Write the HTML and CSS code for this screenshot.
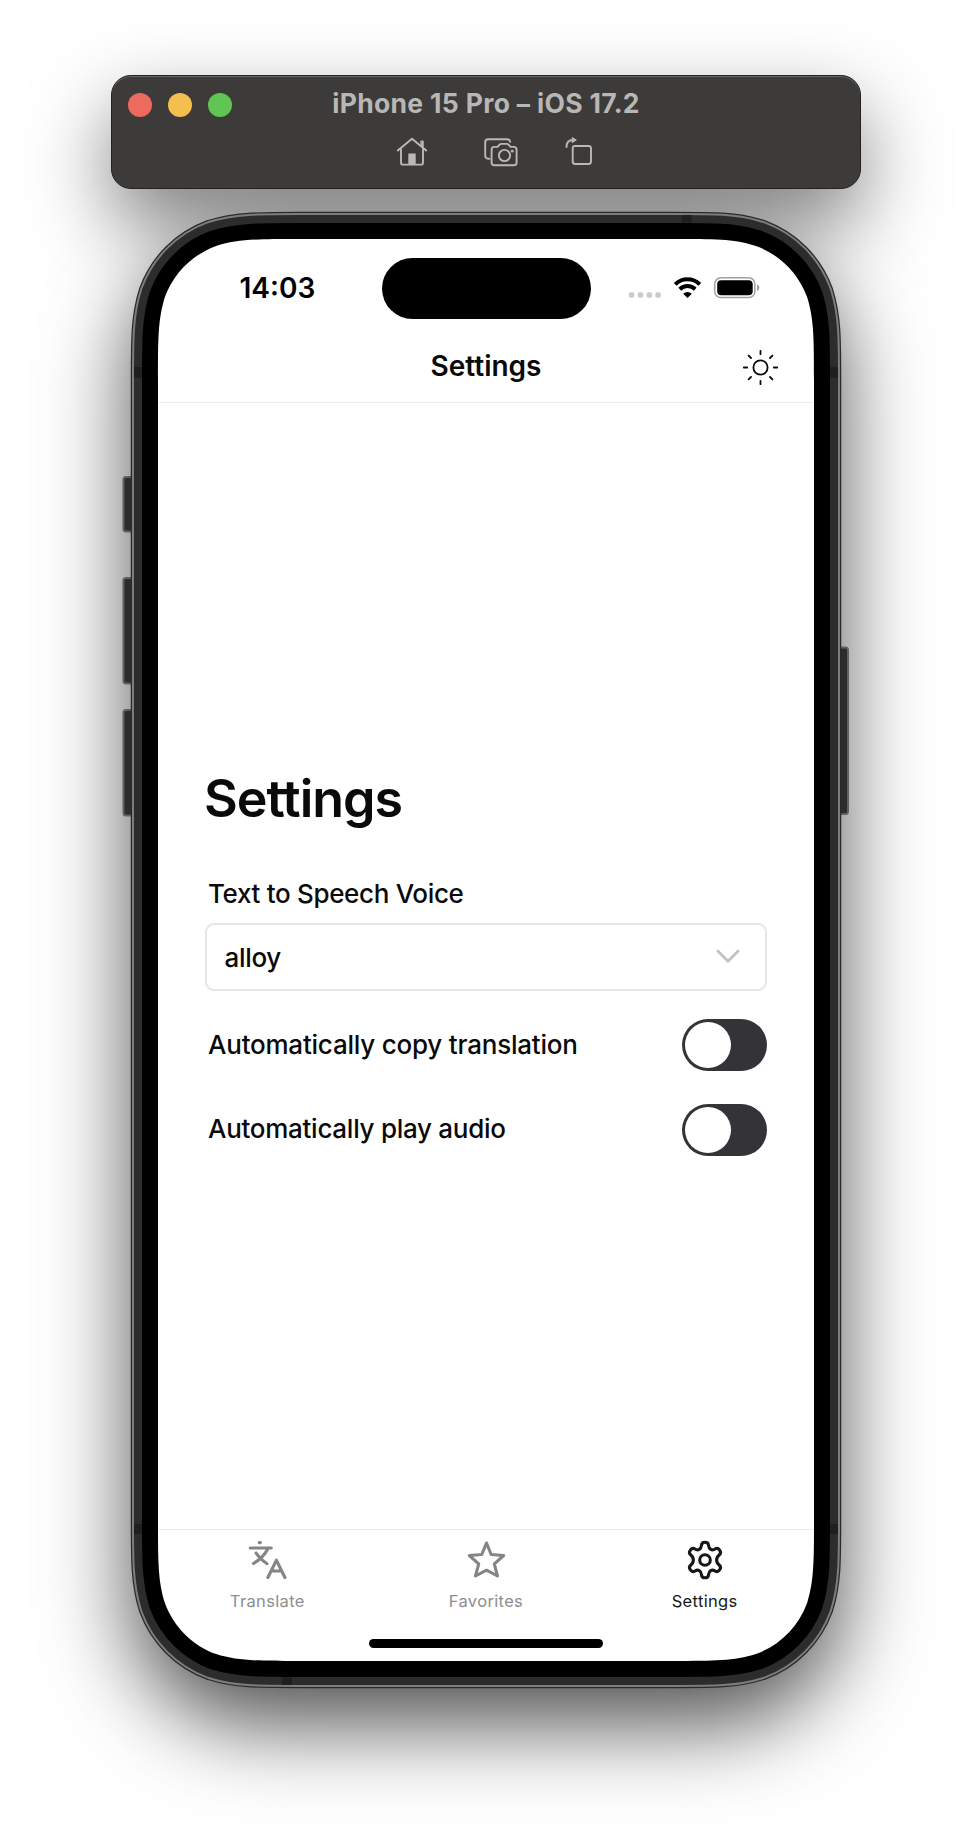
FILE: index.html
```
<!DOCTYPE html>
<html lang="en">
<head>
<meta charset="utf-8">
<title>Settings</title>
<link rel="stylesheet" href="styles.css">
</head>
<body>
<div class="window">
  <header class="toolbar">
    <div class="title-row">
      <div class="lights"><span class="light red"></span><span class="light yellow"></span><span class="light green"></span></div>
      <div class="title"><span class="title-text">iPhone 15 Pro – iOS 17.2</span></div>
      <div></div>
    </div>
    <div class="tools">
      <svg class="tool-home" width="32" height="30" viewBox="0 0 32 30" fill="none" stroke="#bab8b6" stroke-width="1.900" stroke-linecap="round" stroke-linejoin="round"><path d="M1.800 13.600 16 1.800 30.200 13.600M5 12v13.700q0 1.900 1.900 1.900h18.200q1.900 0 1.900-1.900V12"/><path d="M25.200 4h2v6.500l-2-1.500z" fill="#bab8b6" stroke-width="1"/><path d="M12.300 16.500h7.400v10.800h-7.400z" fill="#bab8b6" stroke="none"/></svg>
      <svg class="tool-shot" width="34" height="30" viewBox="0 0 34 30" fill="none" stroke="#bab8b6" stroke-width="1.900" stroke-linecap="round" stroke-linejoin="round"><path d="M5.500 21.700H4.200q-3 0-3-3V5.200q0-3 3-3h19q2.600 0 3 2.600"/><path d="M10.400 9.900h3.100l1.900-2.100q.8-.9 2-.9h5.300q1.200 0 2 .9l1.900 2.100h3.200q2.800 0 2.800 2.800v12.700q0 2.800-2.800 2.800H10.400q-2.800 0-2.800-2.800V12.700q0-2.800 2.800-2.800z"/><circle cx="20.500" cy="18.500" r="5.600"/><circle cx="28.300" cy="14.200" r="1.400" fill="#bab8b6" stroke="none"/></svg>
      <svg class="tool-rotate" width="28" height="30" viewBox="0 0 28 30" fill="none" stroke="#bab8b6" stroke-width="1.900" stroke-linecap="round" stroke-linejoin="round"><rect x="7.700" y="9" width="18.300" height="18" rx="2.400"/><path d="M1.500 10.100C1.500 5.500 3.500 3 8 3"/><path d="M7.500.700 11.300 3 7.500 5.500z" fill="#bab8b6" stroke-width="1"/></svg>
    </div>
  </header>

  <section class="device">
    <svg class="chassis" width="730" height="1480" viewBox="121 210 730 1480">
      <defs>
        <path id="glass" d="M298.600 239H673.400C713.900 239 734.100 239 752.400 245L755.900 245.900C779.700 254.600 798.400 273.300 807.100 297.100C814 318.900 814 339.100 814 379.600V1520.400C814 1560.900 814 1581.100 807.100 1602.900C798.400 1626.700 779.700 1645.400 755.900 1654.100C734.100 1661 713.900 1661 673.400 1661H298.600C258.100 1661 237.900 1661 216.100 1654.100C192.300 1645.400 173.600 1626.700 164.900 1602.900C158 1581.100 158 1560.900 158 1520.400V379.600C158 339.100 158 318.900 164.900 297.100C173.600 273.300 192.300 254.600 216.100 245.900C237.900 239 258.100 239 298.600 239Z"/>
      </defs>
      <g fill="#2c2c2c" stroke="#606060" stroke-width="2">
        <rect x="123.500" y="477" width="14" height="54.500" rx="2.500"/>
        <rect x="123.500" y="578" width="14" height="105.500" rx="2.500"/>
        <rect x="123.500" y="710" width="14" height="105.500" rx="2.500"/>
        <rect x="834.500" y="647.500" width="13.500" height="166.500" rx="2.500"/>
      </g>
      <use href="#glass" stroke="#2a2a2a" stroke-width="54.500"/>
      <use href="#glass" stroke="#7d7d7d" stroke-width="52"/>
      <use href="#glass" stroke="#2c2c2c" stroke-width="48"/>
      <path fill="#1f1f1f" d="M681.700 215h10v8.500h-10zM134 367h9v10.500h-9zM829.500 367h8.500v10.500h-8.500zM134 1524h9v10h-9zM829.500 1524h8.500v10h-8.500zM282 1676h10v9h-10z"/>
      <use href="#glass" stroke="#000" stroke-width="32"/>
      <use href="#glass" fill="#fff"/>
    </svg>

    <div class="screen">
      <div class="status">
        <div class="clock"><span class="clock-text">14:03</span></div>
        <div class="island"></div>
        <svg class="indicators" width="136" height="24" viewBox="626 275 136 24">
          <g fill="#cbcbcb"><rect x="628.800" y="292.200" width="5.500" height="5.600" rx="1.800"/><rect x="637.700" y="292.200" width="5.500" height="5.600" rx="1.800"/><rect x="646.600" y="292.200" width="5.500" height="5.600" rx="1.800"/><rect x="655.300" y="292.200" width="5.500" height="5.600" rx="1.800"/></g>
          <g fill="none" stroke="#000" stroke-width="4"><path d="M675.200 284.300A17.500 17.500 0 0 1 699.800 284.300"/><path d="M679.800 289.200A11 11 0 0 1 695.200 289.200"/></g>
          <path d="M687.500 298 683.200 293.700A6.200 6.200 0 0 1 691.800 293.700Z"/>
          <rect x="714.700" y="277.800" width="40.200" height="19.800" rx="6.200" fill="none" stroke="#a0a0a0" stroke-width="1.500"/>
          <rect x="717.200" y="280.200" width="35.500" height="15" rx="4"/>
          <path fill="#a0a0a0" d="M757 284.300q2.400.9 2.400 3.300t-2.400 3.300z"/>
        </svg>
      </div>

      <div class="nav">
        <div></div>
        <div class="nav-title"><span class="nav-text">Settings</span></div>
        <svg class="sun" width="38" height="38" viewBox="-19 -19 38 38" fill="none" stroke="#0a0a0a" stroke-width="1.800" stroke-linecap="round"><circle cx=".5" cy=".5" r="7.100"/><path transform="translate(.5 .5)" d="M0-13.300v-3.400M0 13.300v3.400M-13.300 0h-3.400M13.300 0h3.400M-9.500-9.500-11.900-11.900M9.500-9.500 11.900-11.900M-9.500 9.500-11.900 11.900M9.500 9.500 11.900 11.900"/></svg>
      </div>

      <main class="content">
        <h1 class="heading">Settings</h1>
        <div class="label label-voice">Text to Speech Voice</div>
        <div class="select"><span class="value">alloy</span>
          <svg width="26" height="16" viewBox="0 0 26 16" fill="none" stroke="#c2c2c2" stroke-width="2.800" stroke-linecap="round" stroke-linejoin="round"><path d="M2.800 2 13 12.300 23.200 2"/></svg>
        </div>
        <div class="option"><span class="label label-copy">Automatically copy translation</span><span class="switch"><span class="knob"></span></span></div>
        <div class="option"><span class="label label-play">Automatically play audio</span><span class="switch"><span class="knob"></span></span></div>
      </main>

      <nav class="tabs">
        <div class="tab"><svg width="42" height="42" viewBox="0 0 42 42" fill="none" stroke="#858585" stroke-width="3.100" stroke-linecap="round" stroke-linejoin="round"><path d="M4.300 9h21M13.200 3.600h1.200M21.700 10Q17.500 18.500 7.500 24.500M10 14Q14 20 21 24.700M21.900 38.500 30.400 21.200 38.900 38.500M25.500 32h9.800"/></svg><span class="tab-text">Translate</span></div>
        <div class="tab"><svg width="42" height="42" viewBox="0 0 42 42" fill="none" stroke="#858585" stroke-width="3.100" stroke-linejoin="round"><path d="M21.500 4 26.200 15.500 38.700 16.500 29.300 24.900 32.500 37 21.500 31.200 10.500 37 13.700 24.900 4.300 16.500 16.800 15.500Z"/></svg><span class="tab-text">Favorites</span></div>
        <div class="tab active"><svg width="42" height="42" viewBox="0 0 42 42" fill="none" stroke="#171717" stroke-width="3.100" stroke-linejoin="round"><circle cx="21" cy="21" r="5.300"/><path d="M17.500 6.200C17.800 2.200 24.200 2.200 24.500 6.200C24.800 10.300 28 12 31 10C34.500 7.800 38.500 13.200 35.200 16C31.800 18.500 31.800 23.500 35.200 26C38.500 28.800 34.500 34.200 31 32C28 30 24.800 31.700 24.500 35.800C24.200 39.800 17.800 39.800 17.500 35.800C17.200 31.700 14 30 11 32C7.500 34.200 3.500 28.800 6.800 26C10.200 23.500 10.200 18.500 6.800 16C3.500 13.200 7.500 7.800 11 10C14 12 17.200 10.300 17.500 6.200Z"/></svg><span class="tab-text">Settings</span></div>
      </nav>
      <div class="home-row"><div class="home-bar"></div></div>
    </div>
  </section>
</div>
</body>
</html>
```
FILE: styles.css
```
* { box-sizing: border-box; }
body { margin: 0; background: #fff; font-family: Inter, "Liberation Sans", sans-serif; color: #0a0a0a; }
svg { display: block; }
.window { isolation: isolate; height: 1840px; padding-top: 75px; display: flex; flex-direction: column; align-items: center; overflow: hidden; }

.toolbar { width: 750px; height: 114px; border-radius: 20px; background: #3d3b39; border: 1px solid #222; padding: 15px 16px 0; box-shadow: inset 0 1px 0 #696765, 0 34px 80px rgba(0,0,0,.5); }
.title-row { display: grid; grid-template-columns: 120px 1fr 120px; align-items: center; height: 26px; }
.lights { display: flex; gap: 16px; }
.light { width: 24px; height: 24px; border-radius: 50%; }
.red { background: #ed6a5f; }
.yellow { background: #f5bf4f; }
.green { background: #61c554; }
.title { text-align: center; font-weight: 700; font-size: 26.5px; line-height: 24px; padding-bottom: 3px; letter-spacing: .32px; color: #b9b7b5; white-space: nowrap; }
.tools { display: flex; padding: 20px 0 0 268px; }
.tool-shot { margin-left: 56px; }
.tool-rotate { margin-left: 47px; }

.device { position: relative; width: 710px; height: 1478px; margin-top: 22px; padding: 28px 27px; }
.device::before { content: ""; position: absolute; inset: 3px; border-radius: 122px; z-index: -1; box-shadow: 0 36px 86px 3px rgba(0,0,0,.68); }
.chassis { position: absolute; left: -10px; top: -1px; }
.screen { position: relative; width: 656px; height: 1422px; display: flex; flex-direction: column; }

.status { height: 99px; display: grid; grid-template-columns: 224px 209px 1fr; padding-top: 19px; }
.island { height: 61px; border-radius: 31px; background: #000; }
.clock { padding: 13px 0 0 81.5px; font-weight: 600; font-size: 28px; line-height: 34px; color: #000; }
.indicators { margin: 17px 0 0 35px; }
.nav { height: 65px; display: grid; grid-template-columns: 100px 1fr 100px; border-bottom: 1px solid #ededed; }
.nav-title { text-align: center; font-weight: 600; font-size: 28px; line-height: 34px; padding-top: 11px; }
.sun { margin: 10px 0 0 27px; }

.content { flex: 1; padding: 366px 47px 0; }
.heading { margin: 0; margin-left: -1px; font-size: 52px; line-height: 60px; font-weight: 600; letter-spacing: -1px; }
.label { font-size: 26px; line-height: 32px; font-weight: 500; padding-left: 3px; white-space: nowrap; letter-spacing: -.33px; }
.label-copy { letter-spacing: -.22px; padding-bottom: 1px; }
.label-play { letter-spacing: -.28px; padding-bottom: 2px; }
.label-voice { margin-top: 49px; }
.select { height: 68px; margin-top: 13px; border: 2px solid #e6e6e6; border-radius: 9px; display: flex; align-items: center; justify-content: space-between; padding: 0 24px 0 17.5px; font-size: 26px; font-weight: 500; letter-spacing: -.33px; }
.option { display: flex; align-items: center; justify-content: space-between; height: 52px; margin-top: 28px; }
.option + .option { margin-top: 33px; }
.switch { width: 85px; height: 52px; border-radius: 26px; background: #343338; padding: 3px; }
.knob { display: block; width: 46px; height: 46px; border-radius: 50%; background: #fff; }

.tabs { height: 86px; border-top: 1px solid #ebebeb; display: grid; grid-template-columns: repeat(3, 1fr); }
.tab { display: flex; flex-direction: column; align-items: center; padding-top: 9px; color: #8e8e8e; font-size: 16.5px; line-height: 20px; letter-spacing: .35px; }
.tab-text { margin-top: 10px; }
.active { color: #171717; }
.home-row { height: 46px; display: flex; justify-content: center; padding-top: 24px; }
.home-bar { width: 234px; height: 9px; border-radius: 5px; background: #000; }
```
